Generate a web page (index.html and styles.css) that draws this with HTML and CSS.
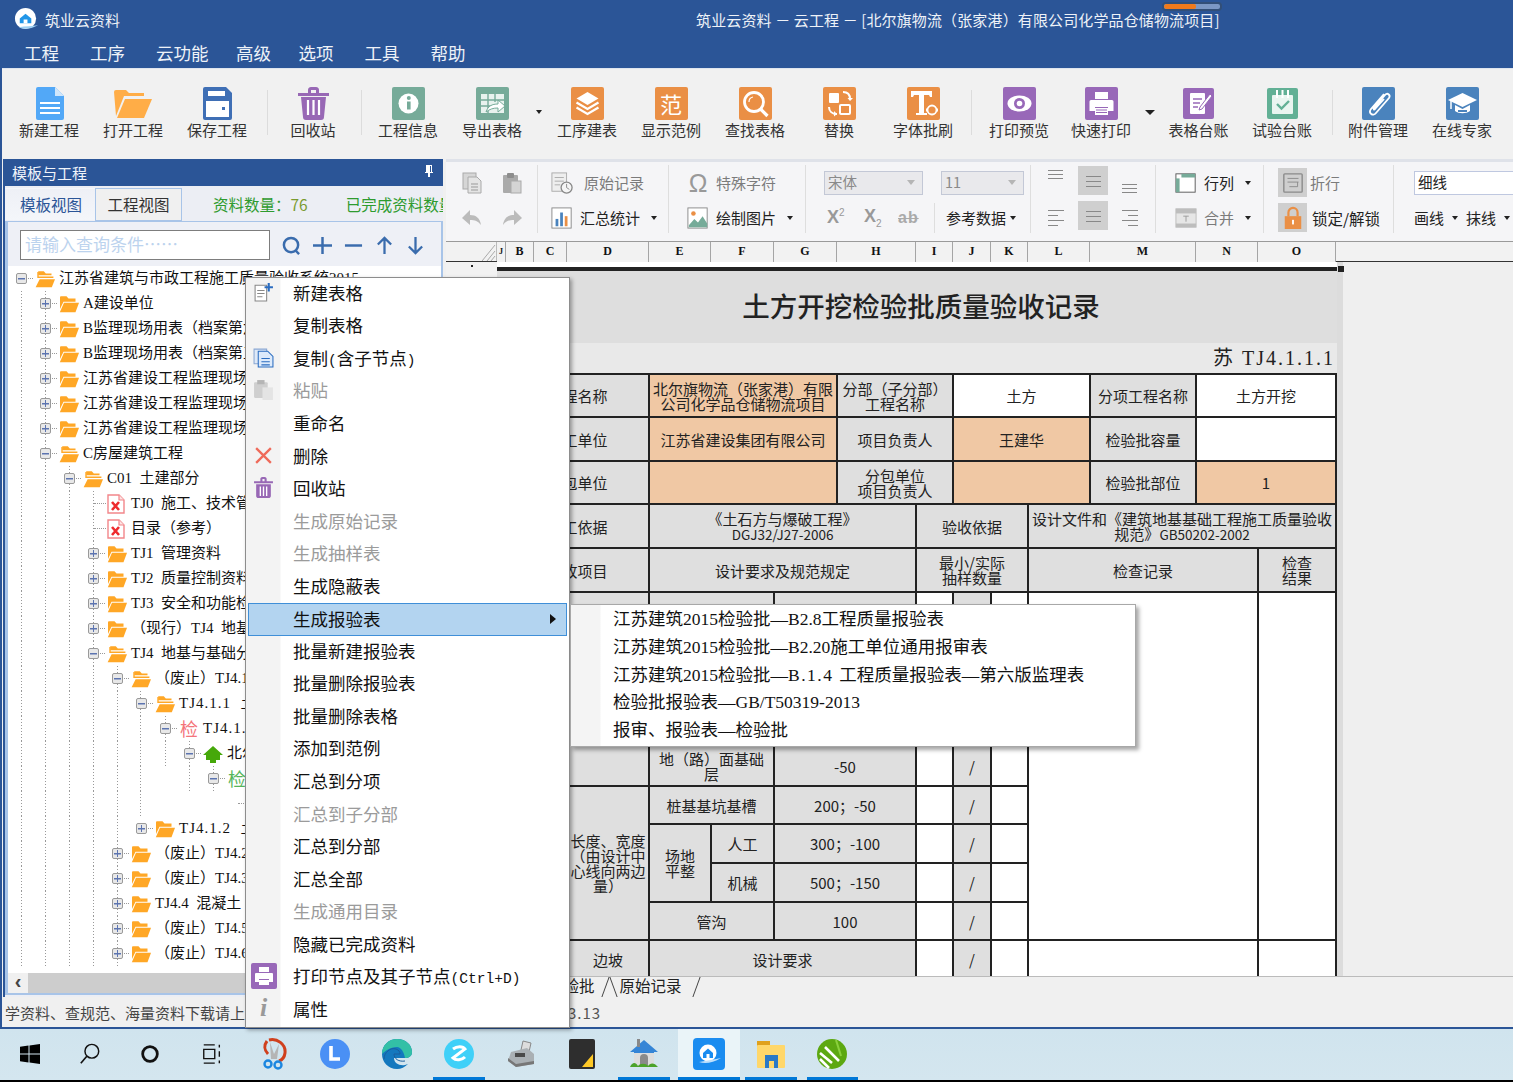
FILE: index.html
```html
<!DOCTYPE html>
<html lang="zh-CN">
<head>
<meta charset="utf-8">
<title>筑业云资料</title>
<link rel="stylesheet" href="styles.css">
</head>
<body>
<svg class="defs" width="0" height="0" aria-hidden="true">
  <symbol id="folder" viewBox="0 0 20 20">
    <path d="M1 3.600c0-.8.5-1.300 1.200-1.300h5.300l2 2.200h7v3.300H4.500L1 15z" fill="#ffa726"/>
    <path d="M5 8.800h15l-3.500 9.400H.8z" fill="#ffa726"/>
  </symbol>
  <symbol id="folderopen" viewBox="0 0 20 20">
    <path d="M3.200 2.300h5.600l2 2.200h5.700v1.800H3.200z" fill="#ffa726"/>
    <path d="M3 3v5.200h15.400" fill="none" stroke="#ffa726" stroke-width="1.400"/>
    <path d="M4.600 10.200H20l-3.200 8H.6z" fill="#ffa726"/>
  </symbol>
  <symbol id="pdf" viewBox="0 0 18 20">
    <path d="M1 1h11l5 5v13H1z" fill="#fff" stroke="#f2868a" stroke-width="1.400"/>
    <path d="M12 1v5h5" fill="#fde3e3" stroke="#f2868a" stroke-width="1.200"/>
    <path d="M5 8l7 8M12 8l-7 8" stroke="#ee2b2e" stroke-width="2.600"/>
  </symbol>
</svg>
<div class="app">
  <header class="titlebar">
    <div class="title-left">
      <svg class="logo" viewBox="0 0 26 26"><circle cx="12" cy="12" r="11" fill="#fff"/><path d="M6 12l6-5 6 5v5H6z" fill="#2196e8"/><rect x="10" y="13" width="4" height="4" fill="#fff"/><path d="M5 21c6 3 12 2 20-2-6 1-13 1-20 2z" fill="#9fd0f3"/></svg>
      <span>筑业云资料</span>
    </div>
    <div class="title-main">筑业云资料 － 云工程 － [北尔旗物流（张家港）有限公司化学品仓储物流项目]</div>
    <div class="progress"><div class="progress-fill"></div></div>
  </header>
  <nav class="menubar">
    <span>工程</span><span>工序</span><span class="m-tight">云功能</span><span class="m-tight">高级</span><span>选项</span><span>工具</span><span>帮助</span>
  </nav>
  <div class="workspace">
    <section class="ribbon">
      <div class="rb">
        <svg class="ic" viewBox="0 0 33 33"><path d="M3 2a2 2 0 012-2h17l9 9v22a2 2 0 01-2 2H5a2 2 0 01-2-2z" fill="#52a8f7"/><path d="M22 0l9 9h-9z" fill="#cfe6fb"/><path d="M7 16h20M7 21h20M7 26h20" stroke="#fff" stroke-width="2.200"/></svg>
        <span>新建工程</span>
      </div>
      <div class="rb">
        <svg class="ic ic-wide" viewBox="0 0 40 33"><path d="M1 5a2 2 0 012-2h10l3 3h15v3H11L3 29z" fill="#ffad47"/><path d="M12 12h27l-8 19H4z" fill="#ffad47"/></svg>
        <span>打开工程</span>
      </div>
      <div class="rb">
        <svg class="ic" viewBox="0 0 33 33"><path d="M2 2a2 2 0 012-2h21l6 6v25a2 2 0 01-2 2H4a2 2 0 01-2-2z" fill="#3f6fb5"/><rect x="7" y="4" width="17" height="5" fill="#fff"/><rect x="5" y="14" width="23" height="16" fill="#fff"/><rect x="21" y="20" width="3" height="3" fill="#3f6fb5"/></svg>
        <span>保存工程</span>
      </div>
      <i class="rsep"></i>
      <div class="rb">
        <svg class="ic" viewBox="0 0 33 33"><path d="M1 6h31v3H1zM11 6V3c0-1.600 1-3 3-3h5c2 0 3 1.400 3 3v3h-3V3h-5v3z" fill="#9868b5"/><path d="M4 10h25l-2 20c0 1.800-1 3-3 3H9c-2 0-3-1.200-3-3z" fill="#9868b5"/><path d="M11 13v15M16.500 13v15M22 13v15" stroke="#fff" stroke-width="2.200"/></svg>
        <span>回收站</span>
      </div>
      <i class="rsep rsep-b"></i>
      <div class="rb">
        <svg class="ic" viewBox="0 0 33 33"><rect width="33" height="33" rx="2" fill="#76ab99"/><circle cx="16.500" cy="16.500" r="10" fill="#fff"/><rect x="15" y="14.500" width="3.600" height="8" fill="#76ab99"/><circle cx="16.800" cy="11" r="2" fill="#76ab99"/></svg>
        <span>工程信息</span>
      </div>
      <div class="rb">
        <svg class="ic" viewBox="0 0 33 33"><rect width="33" height="33" rx="2" fill="#76ab99"/><rect x="5" y="7" width="23" height="19" fill="#e8f2ee"/><path d="M5 13h23M5 19h12M12 7v19M19 7v8" stroke="#76ab99" stroke-width="1.400"/><path d="M10 25c2-6 6-8 12-8v-4l7 6-7 6v-4c-5 0-8 1-12 4z" fill="#fff" stroke="#76ab99"/></svg>
        <span>导出表格</span>
      </div>
      <i class="rcaret"></i>
      <div class="rb">
        <svg class="ic" viewBox="0 0 33 33"><rect width="33" height="33" rx="2" fill="#ea8f45"/><path d="M16.500 5l11 6.500-11 6.500-11-6.500z" fill="#fff"/><path d="M5.500 15.500l11 6.500 11-6.500M5.500 20.500l11 6.500 11-6.500" fill="none" stroke="#fff" stroke-width="2.200"/></svg>
        <span>工序建表</span>
      </div>
      <div class="rb">
        <div class="ic-fan">范</div>
        <span>显示范例</span>
      </div>
      <div class="rb">
        <svg class="ic" viewBox="0 0 33 33"><rect width="33" height="33" rx="2" fill="#ea8f45"/><circle cx="15" cy="15" r="9.500" fill="none" stroke="#fff" stroke-width="2.800"/><path d="M21.500 22l7 7" stroke="#fff" stroke-width="3.200"/><path d="M10 15a5 5 0 014-5" fill="none" stroke="#fff" stroke-width="1.200"/></svg>
        <span>查找表格</span>
      </div>
      <div class="rb">
        <svg class="ic" viewBox="0 0 33 33"><rect width="33" height="33" rx="2" fill="#ea8f45"/><rect x="6" y="6" width="10" height="10" rx="1" fill="#fff"/><rect x="17" y="18" width="10" height="9" rx="1" fill="none" stroke="#fff" stroke-width="2"/><path d="M20 5c4 0 7 2 7 7M6 20c0 4 3 7 8 7" fill="none" stroke="#fff" stroke-width="2"/><path d="M24.500 11l2.500 3 3-3zM11 24l3 3-3 2.500z" fill="#fff"/></svg>
        <span>替换</span>
      </div>
      <div class="rb">
        <svg class="ic" viewBox="0 0 33 33"><rect width="33" height="33" rx="2" fill="#ea8f45"/><path d="M4 4h21v6h-2l-1-2h-5v18h3v2H9v-2h3V8H7l-1 2H4z" fill="#fff"/><circle cx="25" cy="23" r="4.500" fill="none" stroke="#fff" stroke-width="1.800"/><path d="M21 23l-2-2v4zM29 23l2 2v-4z" fill="#fff"/></svg>
        <span>字体批刷</span>
      </div>
      <i class="rsep rsep-c"></i>
      <div class="rb rb-82">
        <svg class="ic" viewBox="0 0 33 33"><rect width="33" height="33" rx="2" fill="#9868b8"/><ellipse cx="16.500" cy="16.500" rx="12" ry="8" fill="#fff"/><circle cx="16.500" cy="16.500" r="5.500" fill="#9868b8"/><circle cx="16.500" cy="16.500" r="2.800" fill="#fff"/></svg>
        <span>打印预览</span>
      </div>
      <div class="rb rb-82">
        <svg class="ic" viewBox="0 0 33 33"><rect width="33" height="33" rx="2" fill="#9868b8"/><rect x="10" y="5" width="13" height="7" fill="#fff"/><path d="M6 13h21a1.500 1.500 0 011.500 1.500V24H23v-4H10v4H4.500v-9.500A1.500 1.500 0 016 13z" fill="#fff"/><path d="M10 21h13v7H10z" fill="#fff"/><path d="M11 23h11M11 25.500h11" stroke="#9868b8"/></svg>
        <span>快速打印</span>
      </div>
      <i class="rcaret rcaret-w"></i>
      <div class="rb rb-83">
        <svg class="ic ic-sm" viewBox="0 0 31 31"><rect width="31" height="31" rx="2" fill="#9868b8"/><rect x="7" y="5" width="15" height="21" rx="1" fill="#fff"/><path d="M10 11h9M10 15h7M10 19h5" stroke="#9868b8" stroke-width="1.500"/><path d="M27 6l2 2-10 13-3 1 1-3z" fill="#fff" stroke="#9868b8"/></svg>
        <span>表格台账</span>
      </div>
      <div class="rb">
        <svg class="ic ic-sm" viewBox="0 0 31 31"><rect width="31" height="31" rx="2" fill="#62b095"/><rect x="5" y="7" width="21" height="19" rx="1" fill="#e9f5f0"/><path d="M10 2v8M15.500 2v8M21 2v8" stroke="#fff" stroke-width="2"/><path d="M10 16l4.500 4.500L22 13" fill="none" stroke="#62b095" stroke-width="2.400"/></svg>
        <span>试验台账</span>
      </div>
      <i class="rsep"></i>
      <div class="rb">
        <svg class="ic" viewBox="0 0 33 33"><rect width="33" height="33" rx="2" fill="#4a83bd"/><path d="M22 7L9 22c-3 4 2 8 5 4l13-15c2-3-2-6-4-3L12 21c-1 1 0 2 1 1l9-10" fill="none" stroke="#fff" stroke-width="1.800"/></svg>
        <span>附件管理</span>
      </div>
      <div class="rb">
        <svg class="ic" viewBox="0 0 33 33"><rect width="33" height="33" rx="2" fill="#4a83bd"/><path d="M16.500 6L31 13l-14.500 7L2 13z" fill="#fff"/><path d="M9 18v6c4 3 11 3 15 0v-6l-7.500 4z" fill="#fff"/><path d="M12 24h9" stroke="#4a83bd" stroke-width="2"/><path d="M5 14v8" stroke="#fff" stroke-width="1.500"/></svg>
        <span>在线专家</span>
      </div>
    </section>

    <div class="main">
      <aside class="panel">
        <div class="panel-head"><span>模板与工程</span>
          <svg class="pin" viewBox="0 0 10 12"><path d="M2 0h6v7h1v1H6v4H4V8H1V7h1z" fill="#fff"/><path d="M6 1h1v6H6z" fill="#2b5597"/></svg>
        </div>
        <div class="tabs">
          <div class="tab tab-on">模板视图</div>
          <div class="tab">工程视图</div>
          <div class="count">资料数量：<em>76</em></div>
          <div class="count count-done">已完成资料数量：12</div>
        </div>
        <div class="panel-body">
          <div class="search">
            <div class="search-input">请输入查询条件……</div>
            <svg class="s-ic" viewBox="0 0 20 20"><circle cx="9.500" cy="9.500" r="7.500" fill="none" stroke="#3a6cad" stroke-width="2.600"/><path d="M14 15l4 4" stroke="#3a6cad" stroke-width="2.600"/></svg>
            <svg class="s-ic" viewBox="0 0 20 20"><path d="M0 10h20M10 1v18" stroke="#3a6cad" stroke-width="2.600"/></svg>
            <svg class="s-ic" viewBox="0 0 20 20"><path d="M1 10h18" stroke="#3a6cad" stroke-width="2.600"/></svg>
            <svg class="s-ic" viewBox="0 0 20 20"><path d="M10 19V2M3 9l7-7 7 7" fill="none" stroke="#3a6cad" stroke-width="2.400"/></svg>
            <svg class="s-ic" viewBox="0 0 20 20"><path d="M10 1v17M3 11l7 7 7-7" fill="none" stroke="#3a6cad" stroke-width="2.400"/></svg>
          </div>
          <div class="tree">
            <div class="row l0"><b class="ex minus"></b><svg class="fi"><use href="#folderopen"/></svg><span>江苏省建筑与市政工程施工质量验收系统2015</span></div>
            <div class="row l1 g2"><b class="ex plus"></b><svg class="fi"><use href="#folder"/></svg><span>A建设单位</span></div>
            <div class="row l1 g2"><b class="ex plus"></b><svg class="fi"><use href="#folder"/></svg><span>B监理现场用表（档案第六版）</span></div>
            <div class="row l1 g2"><b class="ex plus"></b><svg class="fi"><use href="#folder"/></svg><span>B监理现场用表（档案第五版）</span></div>
            <div class="row l1 g2"><b class="ex plus"></b><svg class="fi"><use href="#folder"/></svg><span>江苏省建设工程监理现场用表</span></div>
            <div class="row l1 g2"><b class="ex plus"></b><svg class="fi"><use href="#folder"/></svg><span>江苏省建设工程监理现场用表</span></div>
            <div class="row l1 g2"><b class="ex plus"></b><svg class="fi"><use href="#folder"/></svg><span>江苏省建设工程监理现场用表</span></div>
            <div class="row l1 g2"><b class="ex minus"></b><svg class="fi"><use href="#folderopen"/></svg><span>C房屋建筑工程</span></div>
            <div class="row l2 g3"><b class="ex minus"></b><svg class="fi"><use href="#folderopen"/></svg><span>C01&nbsp;&nbsp;土建部分</span></div>
            <div class="row l3 g4"><b class="ex none"></b><svg class="fi fi-pdf"><use href="#pdf"/></svg><span>TJ0&nbsp;&nbsp;施工、技术管理资料</span></div>
            <div class="row l3 g4"><b class="ex none"></b><svg class="fi fi-pdf"><use href="#pdf"/></svg><span>目录（参考）</span></div>
            <div class="row l3 g4"><b class="ex plus"></b><svg class="fi"><use href="#folder"/></svg><span>TJ1&nbsp;&nbsp;管理资料</span></div>
            <div class="row l3 g4"><b class="ex plus"></b><svg class="fi"><use href="#folder"/></svg><span>TJ2&nbsp;&nbsp;质量控制资料</span></div>
            <div class="row l3 g4"><b class="ex plus"></b><svg class="fi"><use href="#folder"/></svg><span>TJ3&nbsp;&nbsp;安全和功能检验</span></div>
            <div class="row l3 g4"><b class="ex plus"></b><svg class="fi"><use href="#folder"/></svg><span>（现行）TJ4&nbsp;&nbsp;地基</span></div>
            <div class="row l3 g4"><b class="ex minus"></b><svg class="fi"><use href="#folderopen"/></svg><span>TJ4&nbsp;&nbsp;地基与基础分部</span></div>
            <div class="row l4 g5"><b class="ex minus"></b><svg class="fi"><use href="#folderopen"/></svg><span>（废止）TJ4.1</span></div>
            <div class="row l5 g6"><b class="ex minus"></b><svg class="fi"><use href="#folderopen"/></svg><span class="dots">TJ4.1.1&nbsp;&nbsp;土方</span></div>
            <div class="row l6 g7"><b class="ex minus"></b><span class="char char-red">检</span><span class="dots">TJ4.1.1.1</span></div>
            <div class="row l7 g8"><b class="ex minus"></b><svg class="fi" viewBox="0 0 20 20"><path d="M10 2L0 11h3v5h4v3h6v-3h4v-5h3z" fill="#46a80a"/></svg><span>北尔旗</span></div>
            <div class="row l8 g9"><b class="ex minus"></b><span class="char char-green">检</span></div>
            <div class="row l9 g6"><b class="ex none"></b></div>
            <div class="row l5 g5"><b class="ex plus"></b><svg class="fi"><use href="#folder"/></svg><span class="dots">TJ4.1.2&nbsp;&nbsp;土方</span></div>
            <div class="row l4 g5"><b class="ex plus"></b><svg class="fi"><use href="#folder"/></svg><span>（废止）TJ4.2</span></div>
            <div class="row l4 g5"><b class="ex plus"></b><svg class="fi"><use href="#folder"/></svg><span>（废止）TJ4.3</span></div>
            <div class="row l4 g5"><b class="ex plus"></b><svg class="fi"><use href="#folder"/></svg><span>TJ4.4&nbsp;&nbsp;混凝土</span></div>
            <div class="row l4 g5"><b class="ex plus"></b><svg class="fi"><use href="#folder"/></svg><span>（废止）TJ4.5</span></div>
            <div class="row l4 g5"><b class="ex plus"></b><svg class="fi"><use href="#folder"/></svg><span>（废止）TJ4.6</span></div>
          </div>
          <div class="hscroll"><div class="hs-btn">‹</div><div class="hs-track"></div></div>
        </div>
      </aside>

      <section class="editor">
        <div class="toolbar">
          <div class="tg tg1">
            <div class="tcell"><svg class="t-ic" viewBox="0 0 22 22"><rect x="2" y="1" width="13" height="16" fill="#d6d6d6" stroke="#aaa"/><path d="M7 5h9l4 4v12H7z" fill="#e4e4e4" stroke="#aaa"/><path d="M10 12h7M10 15h7M10 18h7" stroke="#999"/></svg><svg class="t-ic" viewBox="0 0 22 22"><rect x="2" y="3" width="15" height="18" rx="1" fill="#aaa"/><rect x="6" y="1" width="7" height="5" rx="1" fill="#8d8d8d"/><rect x="10" y="9" width="10" height="12" fill="#d4d4d4" stroke="#aaa"/></svg></div>
            <div class="tcell"><svg class="t-ic" viewBox="0 0 22 22"><path d="M1 11l8-8v5c6 0 10 3 11 10-3-4-6-5-11-5v5z" fill="#bbb"/></svg><svg class="t-ic" viewBox="0 0 22 22"><path d="M21 11l-8-8v5C7 8 3 11 2 18c3-4 6-5 11-5v5z" fill="#bbb"/></svg></div>
          </div>
          <div class="tg tg2">
            <div class="tbtn off tbtn-wide"><svg class="t-ic2" viewBox="0 0 24 24"><rect x="1" y="1" width="16" height="20" fill="#eee" stroke="#aaa"/><path d="M4 6h10M4 10h10M4 14h6" stroke="#aaa"/><circle cx="17" cy="17" r="6" fill="#f5f5f5" stroke="#888" stroke-width="1.400"/><path d="M17 13v4l3 2" fill="none" stroke="#888"/></svg><span>原始记录</span></div>
            <div class="tbtn"><svg class="t-ic2" viewBox="0 0 24 24"><rect x="1" y="1" width="21" height="22" fill="#fff" stroke="#888"/><rect x="5" y="13" width="3" height="8" fill="#4a83bd"/><rect x="10" y="6" width="3" height="15" fill="#4a83bd"/><rect x="15" y="10" width="3" height="11" fill="#ea8f45"/></svg><span>汇总统计</span><i class="cr"></i></div>
          </div>
          <div class="tg tg3">
            <div class="tbtn off"><span class="omega">Ω</span><span>特殊字符</span></div>
            <div class="tbtn"><svg class="t-ic2" viewBox="0 0 24 24"><rect x="1" y="1" width="21" height="22" fill="#fff" stroke="#888"/><circle cx="7" cy="7" r="2.500" fill="#ea8f45"/><path d="M2 20l6-7 4 4 5-7 5 8v4H2z" fill="#76ab99"/></svg><span>绘制图片</span><i class="cr"></i></div>
          </div>
          <div class="tg tg4">
            <div class="tcell tcell-sel">
              <div class="sel sel-font">宋体<i class="sel-ar"></i></div>
              <div class="sel sel-size">11<i class="sel-ar"></i></div>
            </div>
            <div class="tcell tcell-fmt">
              <span class="fmt">X<sup>2</sup></span><span class="fmt">X<sub>2</sub></span><span class="fmt fmt-s">ab</span><i class="isep"></i><span class="ref">参考数据</span><i class="cr"></i>
            </div>
          </div>
          <div class="tg tg5">
            <div class="agrid">
              <i class="al al-t"></i><i class="al al-box"></i><i class="al al-b"></i>
              <i class="al al-l"></i><i class="al al-box al-box2"></i><i class="al al-r"></i>
            </div>
          </div>
          <div class="tg tg6">
            <div class="tbtn"><svg class="t-ic2" viewBox="0 0 24 24"><rect x="1" y="2" width="21" height="20" fill="#fff" stroke="#555"/><rect x="7" y="2" width="15" height="4" fill="#76ab99"/><rect x="1" y="7" width="4" height="15" fill="#76ab99"/></svg><span>行列</span><i class="cr"></i></div>
            <div class="tbtn off"><svg class="t-ic2" viewBox="0 0 24 24"><rect x="1" y="2" width="22" height="20" fill="#e6e6e6" stroke="#bbb"/><rect x="1" y="2" width="22" height="5" fill="#bdbdbd"/><rect x="1" y="18" width="22" height="4" fill="#bdbdbd"/><path d="M9 10h6M12 10v6" stroke="#999"/></svg><span>合并</span><i class="cr"></i></div>
          </div>
          <div class="tg tg7">
            <div class="tbtn off"><div class="boxed"><svg class="t-ic2" viewBox="0 0 24 24"><rect x="2" y="2" width="20" height="20" rx="1" fill="none" stroke="#8a8a8a" stroke-width="1.500"/><path d="M6 7h12M6 11h12M17 11v5H8" fill="none" stroke="#8a8a8a"/></svg></div><span>折行</span></div>
            <div class="tbtn"><div class="boxed"><svg class="t-ic2" viewBox="0 0 24 24"><path d="M7 10V6a5 5 0 0110 0v4" fill="none" stroke="#ea8f45" stroke-width="2.400"/><rect x="3" y="10" width="18" height="14" fill="#ea8f45"/><rect x="11" y="14" width="2" height="5" fill="#fff"/></svg></div><span class="lock-t">锁定/解锁</span></div>
          </div>
          <div class="tg tg8">
            <div class="tcell"><div class="sel sel-line">细线</div></div>
            <div class="tcell tcell-line"><span>画线</span><i class="cr"></i><span>抹线</span><i class="cr"></i></div>
          </div>
        </div>
        <div class="colhead">
          <div class="corner"><svg class="hatch" viewBox="0 0 14 20"><path d="M0 19L13 3M5 19L13 9M9 19l4-5" stroke="#aaa"/></svg></div>
          <div class="col col-j">J</div><div class="col col-b">B</div><div class="col col-c">C</div><div class="col col-d">D</div><div class="col col-e">E</div><div class="col col-f">F</div><div class="col col-g">G</div><div class="col col-h">H</div><div class="col col-i">I</div><div class="col col-jj">J</div><div class="col col-k">K</div><div class="col col-l">L</div><div class="col col-m">M</div><div class="col col-n">N</div><div class="col col-o">O</div>
        </div>
        <div class="sheet">
          <div class="rowhead"><i class="rdot"></i></div>
          <div class="page">
            <div class="sel-bar"><i class="sel-handle"></i></div>
            <div class="doc-title">土方开挖检验批质量验收记录</div>
            <div class="doc-code">苏 TJ4.1.1.1</div>
            <table class="grid">
              <colgroup>
                <col class="c-b"><col class="c-c"><col class="c-d"><col class="c-e"><col class="c-f"><col class="c-g"><col class="c-h"><col class="c-i"><col class="c-j"><col class="c-k"><col class="c-l"><col class="c-m"><col class="c-n"><col class="c-o">
              </colgroup>
              <tr class="r43">
                <td colspan="3">工程名称</td><td colspan="3" class="pe">北尔旗物流（张家港）有限<br>公司化学品仓储物流项目</td><td colspan="2">分部（子分部）<br>工程名称</td><td colspan="3" class="wh">土方</td><td>分项工程名称</td><td colspan="2" class="wh">土方开挖</td>
              </tr>
              <tr class="r44">
                <td colspan="3">施工单位</td><td colspan="3" class="pe">江苏省建设集团有限公司</td><td colspan="2">项目负责人</td><td colspan="3" class="pe">王建华</td><td>检验批容量</td><td colspan="2" class="wh"></td>
              </tr>
              <tr class="r43">
                <td colspan="3">分包单位</td><td colspan="3" class="pe"></td><td colspan="2">分包单位<br>项目负责人</td><td colspan="3" class="pe"></td><td>检验批部位</td><td colspan="2" class="pe">1</td>
              </tr>
              <tr class="r44">
                <td colspan="3">施工依据</td><td colspan="4">《土石方与爆破工程》<br><small>DGJ32/J27-2006</small></td><td colspan="3">验收依据</td><td colspan="4">设计文件和《建筑地基基础工程施工质量验收<br>规范》<small>GB50202-2002</small></td>
              </tr>
              <tr class="r44">
                <td colspan="3">验收项目</td><td colspan="4">设计要求及规范规定</td><td colspan="3">最小/实际<br>抽样数量</td><td colspan="3">检查记录</td><td>检查<br>结果</td>
              </tr>
              <tr class="r38">
                <td colspan="3" rowspan="5"></td><td colspan="2"></td><td colspan="2"></td><td class="wh"></td><td></td><td class="wh"></td><td colspan="3" rowspan="9" class="wh"></td><td rowspan="9" class="wh"></td>
              </tr>
              <tr class="r38"><td colspan="2"></td><td colspan="2"></td><td class="wh"></td><td></td><td class="wh"></td></tr>
              <tr class="r39"><td colspan="2"></td><td colspan="2"></td><td class="wh"></td><td></td><td class="wh"></td></tr>
              <tr class="r39"><td colspan="2"></td><td colspan="2"></td><td class="wh"></td><td></td><td class="wh"></td></tr>
              <tr class="r40"><td colspan="2">地（路）面基础<br>层</td><td colspan="2">-50</td><td class="wh"></td><td>/</td><td class="wh"></td></tr>
              <tr class="r38">
                <td colspan="2" rowspan="5"></td><td rowspan="4">长度、宽度（由设计中心线向两边量）</td><td colspan="2">桩基基坑基槽</td><td colspan="2">200；-50</td><td class="wh"></td><td>/</td><td class="wh"></td>
              </tr>
              <tr class="r39"><td rowspan="2">场地<br>平整</td><td>人工</td><td colspan="2">300；-100</td><td class="wh"></td><td>/</td><td class="wh"></td></tr>
              <tr class="r39"><td>机械</td><td colspan="2">500；-150</td><td class="wh"></td><td>/</td><td class="wh"></td></tr>
              <tr class="r38"><td colspan="2">管沟</td><td colspan="2">100</td><td class="wh"></td><td>/</td><td class="wh"></td></tr>
              <tr class="r39"><td>边坡</td><td colspan="4">设计要求</td><td class="wh"></td><td>/</td><td class="wh"></td><td colspan="3" class="wh"></td><td class="wh"></td></tr>
            </table>
          </div>
          <div class="page-edge"></div>
        </div>
        <div class="sheet-tabs">
          <div class="stab stab-on">检验批</div>
          <div class="stab">原始记录</div>
        </div>
      </section>
    </div>

    <footer class="statusbar">
      <div class="st-left">学资料、查规范、海量资料下载请上筑业云资料</div>
      <div class="st-right">3.13</div>
    </footer>
  </div>

  <div class="taskbar">
    <div class="tk"><svg class="tk-ic tk-win" viewBox="0 0 20 20"><path d="M0 2.800l8.500-1.200V9.500H0zM9.500 1.400L20 0v9.500H9.500zM0 10.500h8.500v7.900L0 17.200zM9.500 10.500H20V20L9.500 18.600z" fill="#000"/></svg></div>
    <div class="tk"><svg class="tk-ic" viewBox="0 0 24 24"><circle cx="14" cy="9" r="7.500" fill="none" stroke="#111" stroke-width="1.600"/><path d="M8.500 14.500L2 22" stroke="#111" stroke-width="1.800"/></svg></div>
    <div class="tk tk-back"><svg class="tk-ic" viewBox="0 0 24 24"><circle cx="12" cy="12" r="8" fill="none" stroke="#111" stroke-width="3"/></svg></div>
    <div class="tk"><svg class="tk-ic" viewBox="0 0 24 24"><path d="M3 2h12M3 22h12M3 7h12v10H3zM20 2v3M20 9v6M20 19v3" fill="none" stroke="#111" stroke-width="1.500"/></svg></div>
    <div class="tk"><svg class="tk-ic2" viewBox="0 0 32 32"><path d="M11 2c8-2 17 4 16 13-.5 4-3 7-6 8" fill="none" stroke="#d0401d" stroke-width="3"/><path d="M9 3c-3 4-3 9 1 13" fill="none" stroke="#d0401d" stroke-width="3"/><path d="M12 4l4 12 5-10-2 15h-6z" fill="#b5b5b5"/><circle cx="10" cy="26" r="3.500" fill="none" stroke="#1c87e0" stroke-width="2.400"/><circle cx="20" cy="27" r="3.500" fill="none" stroke="#1c87e0" stroke-width="2.400"/></svg></div>
    <div class="tk"><svg class="tk-ic2" viewBox="0 0 32 32"><circle cx="16" cy="16" r="15" fill="#4a90f5"/><path d="M12 8v13h9" fill="none" stroke="#fff" stroke-width="3.600"/></svg></div>
    <div class="tk"><svg class="tk-ic2" viewBox="0 0 32 32"><path d="M16 1c9 0 15 6 15 13 0 4-3 6-7 6H13c0 5 5 8 11 7l3-1c-3 3-7 5-11 5C7 31 1 24 1 16 1 7 8 1 16 1z" fill="#1478be"/><path d="M16 1c9 0 15 6 15 13 0 4-3 6-7 6-1-6-4-11-8-11-7 0-12 4-15 7C1 7 8 1 16 1z" fill="#33c0a6"/><path d="M3 21c0-6 6-12 12-10 3 1 4 3 4 5H13c0 5 5 8 11 7" fill="none" stroke="#1a5e9e" stroke-width="1"/></svg></div>
    <div class="tk tk-on-line"><svg class="tk-ic2" viewBox="0 0 32 32"><circle cx="16" cy="16" r="15" fill="#3fd0f8"/><path d="M10 11c4-3 10-3 12 0l-12 9c3 3 9 2 12-1" fill="none" stroke="#fff" stroke-width="3"/></svg></div>
    <div class="tk"><svg class="tk-ic2" viewBox="0 0 32 32"><path d="M18 3l8 2-2 9-8-2z" fill="#ddd" stroke="#888"/><path d="M6 14l16-4 7 6v10l-18 3-8-6z" fill="#aab0b4"/><path d="M3 23l8 6 18-3v-3l-18 3-8-6z" fill="#777"/><rect x="10" y="15" width="10" height="4" fill="#4a4a4a"/></svg></div>
    <div class="tk"><svg class="tk-ic2" viewBox="0 0 32 32"><rect x="3" y="1" width="26" height="30" rx="2" fill="#2e2e2e"/><path d="M27 16v13H16z" fill="#ffc926"/></svg></div>
    <div class="tk tk-on-line"><svg class="tk-ic2" viewBox="0 0 32 32"><path d="M16 2L2 14h4v14h20V14h4z" fill="#3585d6"/><rect x="6" y="15" width="20" height="13" fill="#ddd"/><path d="M12 28V20a4 4 0 018 0v8z" fill="#8a8a8a"/><path d="M2 29c3-6 6-4 8-1 2-3 8-3 10 0 2-3 6-4 10 1z" fill="#4ca32a"/><rect x="9" y="1" width="3" height="8" fill="#888"/></svg></div>
    <div class="tk tk-active"><svg class="tk-ic2" viewBox="0 0 32 32"><rect width="32" height="32" rx="4" fill="#1a8cf0"/><circle cx="15" cy="15" r="8.500" fill="#fff"/><path d="M10 15l5-4.500 5 4.500v5H10z" fill="#1a8cf0"/><rect x="13.500" y="16" width="3" height="4" fill="#fff"/><path d="M6 24c6 2 14 1 22-4-6 1-14 3-22 4z" fill="#bfe0fb"/></svg></div>
    <div class="tk tk-on-line"><svg class="tk-ic2" viewBox="0 0 32 32"><path d="M2 3h13v6H2z" fill="#e0a11c"/><rect x="2" y="7" width="28" height="23" rx="1" fill="#ffd76a"/><rect x="10" y="17" width="13" height="13" fill="#2a79c7"/><rect x="14" y="23" width="5" height="7" fill="#ffd76a"/></svg></div>
    <div class="tk tk-on-line"><svg class="tk-ic2" viewBox="0 0 32 32"><circle cx="16" cy="16" r="15" fill="#5ca811"/><path d="M4 15l12 10M4 21l9 9M9 9l14 14" stroke="#fff" stroke-width="2.600"/><path d="M20 2l5 16" stroke="#8ad03c" stroke-width="2"/></svg></div>
  </div>

  <div class="ctx">
    <div class="mi"><span class="mi-ic"><svg viewBox="0 0 20 20"><path d="M2 3h11v15H2z" fill="#fff" stroke="#888"/><path d="M4 8h7M4 11h7M4 14h5" stroke="#888"/><path d="M15 1v8M11 5h8" stroke="#2a6cc0" stroke-width="2"/></svg></span><span>新建表格</span></div>
    <div class="mi"><span class="mi-ic"></span><span>复制表格</span></div>
    <div class="mi"><span class="mi-ic"><svg viewBox="0 0 20 20"><path d="M1 2h12v14H1z" fill="#dfe9f7" stroke="#8aa8d4"/><path d="M5 4h9l5 5v10H5z" fill="#dceafb" stroke="#2a6cc0"/><path d="M8 11h8M8 14h8M8 17h8" stroke="#2a6cc0"/></svg></span><span>复制<span class="mono">(</span>含子节点<span class="mono">)</span></span></div>
    <div class="mi off"><span class="mi-ic"><svg viewBox="0 0 20 20"><rect x="1" y="3" width="13" height="15" rx="1" fill="#cfcfcf"/><rect x="4" y="1" width="7" height="4" fill="#b5b5b5"/><rect x="9" y="8" width="10" height="12" fill="#e4e4e4"/></svg></span><span>粘贴</span></div>
    <div class="mi"><span class="mi-ic"></span><span>重命名</span></div>
    <div class="mi"><span class="mi-ic"><svg viewBox="0 0 20 20"><path d="M3 3l14 14M17 3L3 17" stroke="#ef6a5a" stroke-width="2.200"/></svg></span><span>删除</span></div>
    <div class="mi"><span class="mi-ic"><svg viewBox="0 0 20 20"><path d="M1 4h18v2H1zM7 4V2c0-1 .5-2 2-2h2c1.500 0 2 1 2 2v2h-2V2H9v2z" fill="#9868b5"/><path d="M3 7h14v11c0 1-1 2-2 2H5c-1 0-2-1-2-2z" fill="#9868b5"/><path d="M7 9v9M10 9v9M13 9v9" stroke="#fff" stroke-width="1.300"/></svg></span><span>回收站</span></div>
    <div class="mi off"><span class="mi-ic"></span><span>生成原始记录</span></div>
    <div class="mi off"><span class="mi-ic"></span><span>生成抽样表</span></div>
    <div class="mi"><span class="mi-ic"></span><span>生成隐蔽表</span></div>
    <div class="mi mi-hot"><span class="mi-ic"></span><span>生成报验表</span><i class="mi-arrow"></i></div>
    <div class="mi"><span class="mi-ic"></span><span>批量新建报验表</span></div>
    <div class="mi"><span class="mi-ic"></span><span>批量删除报验表</span></div>
    <div class="mi"><span class="mi-ic"></span><span>批量删除表格</span></div>
    <div class="mi"><span class="mi-ic"></span><span>添加到范例</span></div>
    <div class="mi"><span class="mi-ic"></span><span>汇总到分项</span></div>
    <div class="mi off"><span class="mi-ic"></span><span>汇总到子分部</span></div>
    <div class="mi"><span class="mi-ic"></span><span>汇总到分部</span></div>
    <div class="mi"><span class="mi-ic"></span><span>汇总全部</span></div>
    <div class="mi off"><span class="mi-ic"></span><span>生成通用目录</span></div>
    <div class="mi"><span class="mi-ic"></span><span>隐藏已完成资料</span></div>
    <div class="mi"><span class="mi-ic"><svg viewBox="0 0 26 26"><rect width="26" height="26" rx="2" fill="#9868b8"/><rect x="8" y="4" width="10" height="5" fill="#fff"/><path d="M5 10h16a1 1 0 011 1v8h-4v-3H8v3H4v-8a1 1 0 011-1z" fill="#fff"/><rect x="8" y="17" width="10" height="5" fill="#fff"/></svg></span><span>打印节点及其子节点<span class="mono">(Ctrl+D)</span></span></div>
    <div class="mi"><span class="mi-ic mi-i">i</span><span>属性</span></div>
  </div>

  <div class="sub">
    <div class="si">江苏建筑2015检验批—B2.8工程质量报验表</div>
    <div class="si">江苏建筑2015检验批—B2.20施工单位通用报审表</div>
    <div class="si">江苏建筑2015检验批—<span class="sp">B.1.4 </span>工程质量报验表—第六版监理表</div>
    <div class="si">检验批报验表—GB/T50319-2013</div>
    <div class="si">报审、报验表—检验批</div>
  </div>
</div>
</body>
</html>
```
FILE: styles.css
```css
* { box-sizing: border-box; }
html, body { margin: 0; padding: 0; }
body { font-family: "Noto Sans CJK SC", "Noto Sans", sans-serif; color: #222; background: #000; }
.defs { position: absolute; }
.app { position: relative; width: 1513px; height: 1082px; overflow: hidden; display: flex; flex-direction: column; background: #000; }

/* title */
.titlebar { height: 40px; flex: none; background: #2b5597; color: #eef2f8; position: relative; display: flex; align-items: center; font-size: 15px; padding-bottom: 2px; }
.title-left { display: flex; align-items: center; width: 696px; padding-left: 14px; gap: 6px; font-size: 15px; }
.logo { width: 25px; height: 25px; }
.title-main { white-space: nowrap; font-size: 15px; letter-spacing: .13px; }
.progress { position: absolute; left: 1162px; top: 2px; width: 60px; height: 9px; border-radius: 4px; background: #7b97c4; border: 2px solid #324f78; overflow: hidden; }
.progress-fill { width: 32px; height: 100%; background: #f07a1c; border-radius: 2px; }
.menubar { height: 28px; flex: none; background: #2b5597; color: #eef2f8; font-size: 17.500px; display: flex; gap: 31px; padding: 0 0 3px 24px; align-items: center; line-height: 24px; }
.m-tight { margin-right: -3.500px; }

/* frame */
.workspace { flex: none; height: 961px; background: #f0f0f0; border-left: 2px solid #2b5597; border-bottom: 2px solid #2b5597; display: flex; flex-direction: column; }

/* ribbon */
.ribbon { height: 91px; flex: none; display: flex; padding: 18px 0 0 5px; background: #f1f1f1; border-top: 1px solid #dfe5ee; font-size: 15px; color: #333; }
.rb { width: 84px; flex: none; display: flex; flex-direction: column; align-items: center; }
.rb span { line-height: 20px; white-space: nowrap; }
.rb-82 { width: 82px; }
.rb-83 { width: 83px; }
.ic { width: 33px; height: 33px; display: block; }
.ic-wide { width: 40px; }
.ic-sm { width: 31px; height: 33px; }
.ic-fan { width: 33px; height: 33px; background: #ea8f45; border-radius: 2px; color: #fff; font-size: 22px; line-height: 33px; text-align: center; }
.rsep { width: 1px; height: 45px; background: #dcdcdc; margin: 3px 3px 0 8px; flex: none; }
.rsep-b { margin: 3px 4px 0 6px; }
.rsep-c { margin: 3px 6px 0 6px; }
.rcaret { width: 11px; flex: none; position: relative; }
.rcaret::after { content: ""; position: absolute; left: 2px; top: 23px; border: 3.500px solid transparent; border-top: 4px solid #222; border-bottom: 0; }
.rcaret-w { width: 15px; }
.rcaret-w::after { left: 3px; border-left-width: 5px; border-right-width: 5px; border-top-width: 5px; }

/* main */
.main { flex: none; height: 838px; display: flex; padding-left: 1px; gap: 3px; background: #f0f0f0; }
.panel { width: 440px; flex: none; display: flex; flex-direction: column; background: #eceef4; overflow: hidden; border-left: 2px solid #2b5597; }
.panel-head { height: 27px; flex: none; background: #2b5597; color: #f0f4fa; display: flex; align-items: center; justify-content: space-between; padding: 0 9px 0 7px; font-size: 15px; }
.pin { width: 10px; height: 12px; margin-top: -3px; }
.tabs { height: 35px; flex: none; display: flex; font-size: 15.500px; white-space: nowrap; padding-top: 2px; }
.tab { width: 87px; flex: none; text-align: center; line-height: 30px; color: #333; border: 1px solid #a8c4e8; background: #f0f0f0; }
.tab-on { width: 90px; padding-left: 2px; color: #2b5597; background: linear-gradient(#eef0f6, #f4f6fa); border-color: transparent; }
.count { color: #2f9b2f; margin-left: 31px; line-height: 32px; font-size: 15.500px; flex: none; }
.count em { font-style: normal; color: #7a9b2f; }
.count-done { margin-left: 38px; }
.panel-body { flex: none; height: 774px; border: 2px solid #a8c4e8; border-top: 1px solid #a8c4e8; border-left-width: 3px; background: #fff; display: flex; flex-direction: column; }
.search { height: 44px; flex: none; background: #eef0f6; display: flex; align-items: center; padding: 2px 0 0 12px; }
.search-input { width: 250px; height: 30px; border: 1.500px solid #7d7d7d; background: #fff; color: #bcd3ee; font-size: 17px; line-height: 26px; padding-left: 4px; margin-right: 12px; white-space: nowrap; }
.s-ic { width: 19px; height: 19px; margin-right: 12px; flex: none; }

/* tree */
.tree { flex: 1; overflow: hidden; font-family: "Liberation Serif", "Noto Sans CJK SC", serif; font-size: 15px; color: #111; background: #fff; }
.row { --d: repeating-linear-gradient(#999 0 1px, transparent 1px 3px); height: 25px; display: flex; align-items: center; white-space: nowrap; background-repeat: no-repeat; background-size: 1px 100%; }
.row span { line-height: 25px; }
.dots { letter-spacing: 1px; }
.l0 { padding-left: 8px; }
.l1 { padding-left: 32px; }
.l2 { padding-left: 56px; }
.l3 { padding-left: 80px; }
.l4 { padding-left: 104px; }
.l5 { padding-left: 128px; }
.l6 { padding-left: 152px; }
.l7 { padding-left: 176px; }
.l8 { padding-left: 200px; }
.l9 { padding-left: 224px; }
.g2 { background-image: var(--d), var(--d); background-position: 13px 0, 37px 0; }
.g3 { background-image: var(--d), var(--d), var(--d); background-position: 13px 0, 37px 0, 61px 0; }
.g4 { background-image: var(--d), var(--d), var(--d), var(--d); background-position: 13px 0, 37px 0, 61px 0, 85px 0; }
.g5 { background-image: var(--d), var(--d), var(--d), var(--d), var(--d); background-position: 13px 0, 37px 0, 61px 0, 85px 0, 109px 0; }
.g6 { background-image: var(--d), var(--d), var(--d), var(--d), var(--d), var(--d); background-position: 13px 0, 37px 0, 61px 0, 85px 0, 109px 0, 132px 0; }
.g7 { background-image: var(--d), var(--d), var(--d), var(--d), var(--d), var(--d), var(--d); background-position: 13px 0, 37px 0, 61px 0, 85px 0, 109px 0, 132px 0, 157px 0; }
.g8 { background-image: var(--d), var(--d), var(--d), var(--d), var(--d), var(--d), var(--d), var(--d); background-position: 13px 0, 37px 0, 61px 0, 85px 0, 109px 0, 132px 0, 157px 0, 181px 0; }
.g9 { background-image: var(--d), var(--d), var(--d), var(--d), var(--d), var(--d), var(--d), var(--d); background-position: 13px 0, 37px 0, 61px 0, 85px 0, 109px 0, 132px 0, 181px 0, 205px 0; }
.ex { width: 11px; height: 11px; flex: none; margin-right: 8px; border: 1px solid #9a9a9a; border-radius: 2px; background: #e8e8e8 linear-gradient(#5c74b0, #5c74b0) center / 7px 1.500px no-repeat; position: relative; }
.ex::before { content: ""; position: absolute; left: 9px; top: 4px; width: 7px; border-top: 1px dotted #999; }
.plus::after { content: ""; position: absolute; left: 3.500px; top: 1px; width: 1.500px; height: 7px; background: #5c74b0; }
.ex.none { border-color: transparent; background: none; }
.ex.none::before { left: 5px; width: 12px; }
.fi { width: 20px; height: 20px; flex: none; margin-right: 4px; }
.fi-pdf { width: 18px; margin-right: 6px; }
.char { width: 20px; margin-right: 4px; font-size: 18px; font-family: "Noto Sans CJK SC", sans-serif; flex: none; text-align: center; }
.char-red { color: #f4747a; }
.char-green { color: #55b55a; }
.hscroll { height: 20px; flex: none; display: flex; background: #cdcdcd; }
.hs-btn { width: 20px; background: #f0f0f0; color: #444; font-size: 20px; font-weight: 700; line-height: 17px; text-align: center; font-family: "Liberation Sans", sans-serif; }
.hs-track { flex: 1; background: #cdcdcd; }

/* editor */
.editor { flex: 1; min-width: 0; display: flex; flex-direction: column; }
.toolbar { height: 82px; flex: none; display: flex; background: #f5f5f7; border-top: 3px solid #dfe2e9; font-size: 15px; color: #222; padding-top: 3px; }
.tg { flex: none; display: grid; grid-template-rows: 35px 35px; border-right: 1px solid #dedede; height: 68px; white-space: nowrap; }
.tg1 { width: 92px; padding-left: 15px; }
.tg2 { width: 131px; padding-left: 13px; }
.tg3 { width: 137px; padding-left: 18px; }
.tg4 { width: 225px; padding-left: 18px; }
.tg5 { width: 125px; display: block; padding-left: 5px; }
.tg6 { width: 108px; padding-left: 19px; }
.tg7 { width: 130px; padding-left: 14px; }
.tg8 { width: 130px; padding-left: 20px; border-right: 0; }
.tcell { display: flex; align-items: center; gap: 18px; }
.t-ic { width: 22px; height: 22px; }
.t-ic2 { width: 22px; height: 24px; flex: none; }
.tbtn { display: flex; align-items: center; gap: 7px; }
.tbtn-wide { gap: 11px; }
.tbtn.off { color: #7b7b7b; }
.cr { display: inline-block; border: 3px solid transparent; border-top: 4px solid #222; border-bottom: 0; margin-left: 4px; }
.omega { font-size: 25px; color: #999; width: 22px; line-height: 24px; text-align: center; font-family: "Liberation Sans", sans-serif; }
.sel { height: 24px; border: 1.500px solid #c3c8d6; background: #e9e9ec; color: #8a8a8a; line-height: 20px; padding-left: 3px; position: relative; font-size: 14.500px; }
.sel-font { width: 99px; }
.sel-size { width: 83px; }
.sel-ar { position: absolute; right: 7px; top: 8px; border: 4px solid transparent; border-top: 5px solid #b5b5b5; border-bottom: 0; }
.sel-line { width: 110px; background: #fff; color: #222; border-color: #bfc8e0; }
.tcell-fmt { gap: 0; }
.fmt { width: 37px; font-family: "Liberation Sans", sans-serif; font-weight: 700; font-size: 18px; color: #999; padding-left: 3px; }
.fmt sup, .fmt sub { font-size: 10px; font-weight: 400; }
.fmt-s { width: 36px; font-size: 16px; text-decoration: line-through; font-weight: 700; letter-spacing: 1px; color: #aaa; padding-left: 0; }
.isep { width: 1px; height: 30px; background: #dedede; margin: 0 11px 0 0; }
.ref { color: #222; }
.agrid { display: grid; grid-template-columns: 38px 38px 35px; grid-template-rows: 35px 35px; }
.al { display: block; --l: linear-gradient(#888, #888); background-repeat: no-repeat; }
.al-t { background-image: var(--l), var(--l), var(--l); background-size: 15px 1px; background-position: center 5px, center 9px, center 13px; }
.al-b { background-image: var(--l), var(--l), var(--l); background-size: 15px 1px; background-position: center 19px, center 23px, center 27px; }
.al-box { margin: 1px 4px 5px; background-color: #cfcfcf; background-image: var(--l), var(--l), var(--l); background-size: 15px 1px; background-position: center 10px, center 15px, center 20px; }
.al-l { background-image: var(--l), var(--l), var(--l), var(--l); background-size: 16px 1px, 10px 1px, 16px 1px, 10px 1px; background-position: 12px 10px, 12px 15px, 12px 20px, 12px 25px; }
.al-r { background-image: var(--l), var(--l), var(--l), var(--l); background-size: 16px 1px, 10px 1px, 16px 1px, 10px 1px; background-position: 10px 10px, 16px 15px, 10px 20px, 16px 25px; }
.boxed { width: 29px; height: 29px; background: #cfcfcf; display: flex; align-items: center; justify-content: center; margin-right: -4px; }
.lock-t { font-size: 15.500px; margin-left: 2px; }
.tcell-line { gap: 0; }
.tcell-line .cr { margin: 0 8px 0 8px; }

/* col header */
.colhead { height: 21px; flex: none; display: flex; background: #f2f2f2; border-top: 1px solid #9a9a9a; border-bottom: 1px solid #333; font: 700 12px/19px "Liberation Serif", serif; color: #111; }
.corner { width: 51px; background: #f2f2f2; border-right: 1px solid #bbb; display: flex; justify-content: flex-end; }
.hatch { width: 14px; height: 20px; }
.col { border-right: 1px solid #a5a5a5; text-align: center; height: 20px; background: #f2f2f2; flex: none; }
.col-j { width: 9px; font-size: 8px; }
.col-b { width: 28px; }
.col-c { width: 33px; }
.col-d { width: 82px; }
.col-e { width: 62px; }
.col-f { width: 63px; }
.col-g { width: 63px; }
.col-h { width: 79px; }
.col-i { width: 37px; }
.col-jj { width: 38px; }
.col-k { width: 37px; }
.col-l { width: 62px; }
.col-m { width: 106px; }
.col-n { width: 62px; }
.col-o { width: 78px; }

/* sheet */
.sheet { height: 714px; flex: none; display: flex; overflow: hidden; background: #efefef; }
.rowhead { width: 51px; flex: none; background: #f2f2f2; position: relative; }
.rdot { position: absolute; left: 25px; top: 3px; width: 2px; height: 2px; background: #222; }
.page { width: 840px; flex: none; padding-left: 9px; background: #dedede; }
.page-edge { width: 6px; flex: none; background: #dcdcdc; }
.sel-bar { height: 9px; margin-left: -9px; background: #fff; border-bottom: 4px solid #222; position: relative; }
.sel-handle { position: absolute; right: -7px; bottom: -5px; width: 6px; height: 6px; background: #222; }
.doc-title { height: 72px; text-align: center; font-size: 27.500px; line-height: 68px; font-weight: 500; color: #222; margin-left: -9px; padding-left: 8px; background: #dedede; }
.doc-code { height: 30px; margin-left: -9px; background: #e9e9e9; text-align: right; padding-right: 2px; font: 20px/30px "Liberation Serif", "Noto Sans CJK SC", serif; letter-spacing: 2px; color: #222; }
.grid { width: 830px; margin-left: -1px; table-layout: fixed; border-collapse: collapse; font-size: 15px; line-height: 15px; color: #222; text-align: center; background: #dfdfdf; border: 2px solid #222; }
.grid td { border: 2px solid #222; padding: 0; overflow: hidden; background: #dfdfdf; }
.grid td.pe { background: #f0c8a4; }
.grid td.wh { background: #fff; }
.grid small { font-size: 13.500px; }
.c-b { width: 28px; } .c-c { width: 33px; } .c-d { width: 82px; } .c-e { width: 62px; } .c-f { width: 63px; } .c-g { width: 63px; } .c-h { width: 79px; } .c-i { width: 37px; } .c-j { width: 38px; } .c-k { width: 37px; } .c-l { width: 62px; } .c-m { width: 106px; } .c-n { width: 62px; } .c-o { width: 78px; }
.r43 { height: 43px; } .r44 { height: 44px; } .r38 { height: 38px; } .r39 { height: 39px; } .r40 { height: 40px; }

.sheet-tabs { height: 22px; flex: none; display: flex; padding-left: 102px; background: #f0f0f0; border-top: 1px solid #bbb; border-bottom: 1px solid #999; font-size: 15.500px; line-height: 17px; }
.stab { position: relative; padding-right: 25px; white-space: nowrap; }
.stab::after { content: ""; position: absolute; right: 10px; top: 0; height: 20px; border-right: 1.500px solid #444; transform: skewX(-20deg); }
.stab-on::before { content: ""; position: absolute; right: 6px; top: 0; height: 20px; border-right: 1.500px solid #444; transform: skewX(20deg); }
.stab-on::after { right: 14px; }

.statusbar { flex: 1; display: flex; background: #f0f0f0; font-size: 15px; line-height: 28px; color: #444; padding-top: 2px; }
.st-left { width: 566px; padding-left: 3px; white-space: nowrap; overflow: hidden; }
.st-right { color: #555; letter-spacing: 1px; }

/* context menu */
.ctx { position: absolute; left: 245px; top: 277px; width: 325px; height: 751px; padding: 0 1px; background: linear-gradient(90deg, #f3f3f3 0 34px, #fff 35px); border: 1px solid #8d8d8d; box-shadow: 2px 2px 4px rgba(0, 0, 0, .35); font-family: "Liberation Serif", "Noto Sans CJK SC", serif; font-size: 17.500px; color: #111; }
.mi { height: 32.550px; display: flex; align-items: center; white-space: nowrap; position: relative; padding-bottom: 4px; }
.mi.off { color: #9b9b9b; }
.mi-ic { width: 46px; flex: none; display: flex; justify-content: center; padding-right: 13px; height: 100%; align-items: center; }
.mi-ic svg { width: 21px; height: 21px; }
.mi:nth-child(22) .mi-ic svg { width: 26px; height: 26px; }
.mi-i { font: italic 700 26px/1 "Liberation Serif", serif; color: #999; }
.mono { font-family: "Liberation Mono", monospace; font-size: 14.580px; }
.mi-hot { background: #b3d4f0; border: 1px solid #3f8fd8; margin: 0 1px; padding-bottom: 3px; }
.mi-hot .mi-ic { width: 44px; }
.mi-arrow { position: absolute; right: 10px; top: 10px; border: 5px solid transparent; border-left: 6px solid #111; border-right: 0; }
.sub { position: absolute; left: 570px; top: 604px; width: 566px; height: 143px; padding: 1px; background: linear-gradient(90deg, #f4f4f4 0 29px, #fff 30px); border: 1px solid #a8a8a8; box-shadow: 3px 3px 4px rgba(0, 0, 0, .35); font-family: "Liberation Serif", "Noto Sans CJK SC", serif; font-size: 17.500px; color: #111; }
.si { height: 27.800px; line-height: 27.800px; padding-left: 41px; white-space: nowrap; }
.sp { letter-spacing: 1.500px; }

/* taskbar */
.taskbar { height: 51px; flex: none; background: linear-gradient(#d0e4ee, #d4e6ef); display: flex; }
.tk { width: 61.750px; height: 51px; flex: none; display: flex; align-items: center; justify-content: center; position: relative; padding-bottom: 2px; }
.tk:first-child { width: 59px; }
.tk-back { margin-left: -1.500px; }
.tk-ic { width: 22px; height: 22px; }
.tk-win { width: 20px; height: 20px; }
.tk-ic2 { width: 32px; height: 32px; }
.tk-active { background: #eaf4f8; margin-left: 3px; }
.tk-on-line::after, .tk-active::after { content: ""; position: absolute; left: 5px; right: 5px; bottom: 0; height: 3px; background: #0078d7; }
.tk-active::after { left: 0; right: 0; }
```
